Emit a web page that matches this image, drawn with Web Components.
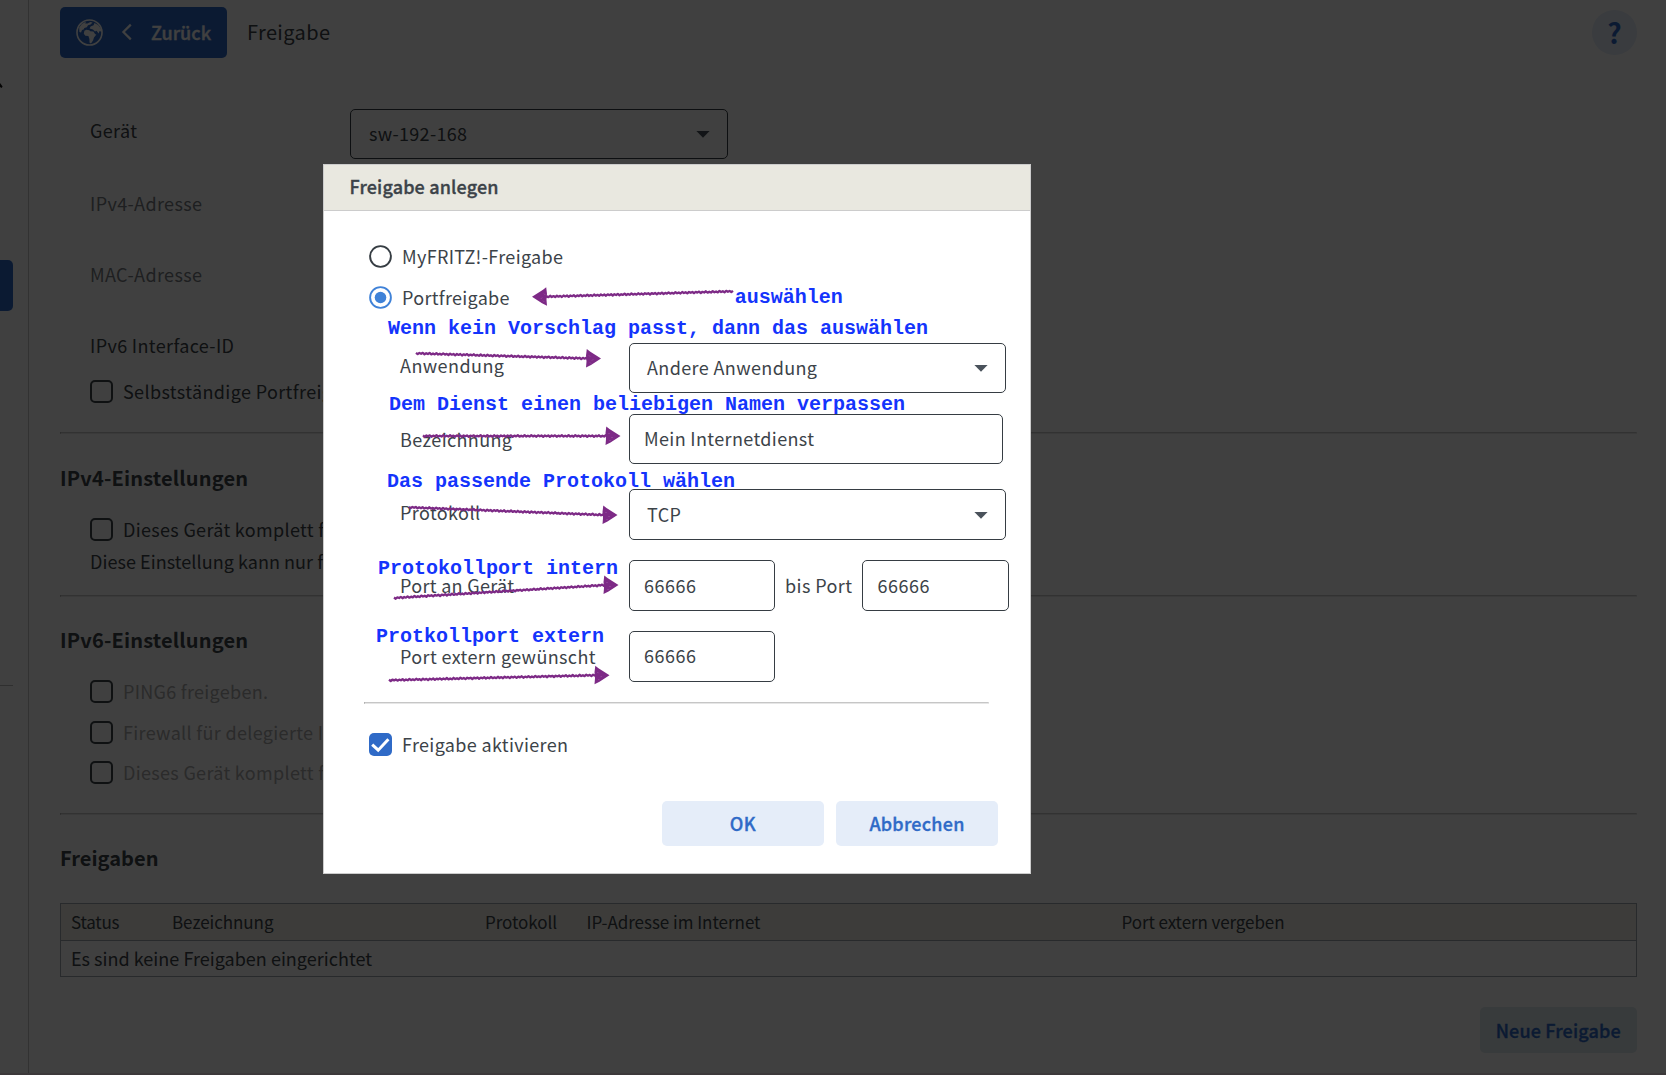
<!DOCTYPE html>
<html lang="de">
<head>
<meta charset="utf-8">
<title>Freigabe</title>
<style>
html,body{margin:0;height:1075px;overflow:hidden;background:#fff}
body{font:400 18px/24px "Noto Sans CJK SC","Noto Sans",sans-serif;color:#3c4349}
</style>
</head>
<body>
<share-app></share-app>
<script>
const define = (name, html, init) => {
  const t = document.createElement('template');
  t.innerHTML = html;
  customElements.define(name, class extends HTMLElement {
    constructor() {
      super();
      this.attachShadow({mode: 'open'}).append(t.content.cloneNode(true));
    }
    connectedCallback() { if (init) init(this, this.shadowRoot); }
  });
};

/* Text label tracked out to width "w"; "col" is the width of the table column it fills */
define('ui-text', `<style>:host{display:inline-block;white-space:pre;flex:none}</style><slot></slot>`, el => {
  const w = parseFloat(el.getAttribute('w'));
  if (!w) return;
  el.style.letterSpacing = '0';
  const n = el.textContent.length;
  const natural = el.getBoundingClientRect().width;
  el.style.letterSpacing = ((w - natural) / (n - 1)).toFixed(3) + 'px';
  if (el.hasAttribute('col')) el.style.width = el.getAttribute('col') + 'px';
});

define('ui-check', `<style>
:host{display:flex;align-items:center;height:23px;gap:10px}
.b{width:23px;height:23px;box-sizing:border-box;border:2px solid #3c4349;border-radius:5px;flex:none}
:host([checked]) .b{border:0;background:#2f6ac7}
svg{display:none;width:23px;height:23px}
:host([checked]) svg{display:block}
span{margin-top:-2px}
</style><div class="b"><svg viewBox="0 0 23 23"><path d="M3.2 11.6 9.2 17.2 19.4 6.3" fill="none" stroke="#fff" stroke-width="3"/></svg></div><span><slot></slot></span>`);

define('ui-radio', `<style>
:host{display:flex;align-items:center;height:23px;gap:10px}
svg{width:23px;height:23px;flex:none}
.on{display:none}
:host([checked]) .on{display:block}
:host([checked]) .ring{stroke:#3f82d8}
span{margin-top:-1px}
</style><svg viewBox="0 0 23 23"><circle class="ring" cx="11.5" cy="11.5" r="10.4" fill="none" stroke="#363d43" stroke-width="1.9"/><circle class="on" cx="11.5" cy="11.5" r="5.8" fill="#3f82d8"/></svg><span><slot></slot></span>`);

define('ui-field', `<style>
:host{display:flex;box-sizing:border-box;align-items:center;justify-content:space-between;height:50px;border:1px solid #363d43;border-radius:5px;padding:0 14px;flex:none}
:host([select]){padding:0 17px}
svg{display:none;width:14px;height:8px}
:host([select]) svg{display:block}
</style><slot></slot><svg viewBox="0 0 14 8"><path d="M.4.9h13.2L7 7.7z" fill="#4a525b"/></svg>`);

define('ui-rule', `<style>:host{display:block;box-sizing:border-box;height:2px;border:1px solid #e6e6e6;border-top-color:#c6c6c6;border-left-color:#999}</style>`);

define('ui-button', `<style>
:host{display:flex;align-items:center;justify-content:center;height:45px;border-radius:5px;background:#e5edf9;color:#2f6ac7;font-weight:500;-webkit-text-stroke:.35px #2f6ac7}
</style><slot></slot>`);

define('back-button', `<style>
:host{display:flex;align-items:center;box-sizing:border-box;width:167px;height:51px;border-radius:5px;background:#2f6ac7;color:#fff;font-weight:500;padding-left:16px}
.c{margin:0 17px 2px 17px}
svg{flex:none}
ui-text{margin-top:-2px;-webkit-text-stroke:.35px #fff}
</style>
<svg width="27" height="27" viewBox="0 0 27 27"><circle cx="13.5" cy="13.5" r="12.5" fill="none" stroke="#fff" stroke-width="1.6"/>
<path fill="#fff" d="M3 9.5 5.6 5.2 10 2.4 9.4 4 11.5 4.2 14.3 2.8 17.4 3.2 16 5 12.6 6.1 10.8 8.6 8.6 9.6 9.4 11.4 7.2 10.9 6.2 12.6 8 13.3 5 15.6 5.4 18 2.2 15.4 1.4 12z" opacity="0"/>
<path fill="#fff" d="M3.2 8.6 5.8 5 10 2.4 9.2 4.4 11.6 4.4 14.3 3 16.6 3.6 14.6 5.4 12 6.2 10.8 8.2 8.4 9 7.6 10.6 6 11 5 13.4 3.4 13z"/>
<path fill="#fff" d="M8.4 11.8 10.4 10.8 13.4 11.2 14.2 12.2 17.4 12.4 19.2 15.2 20.4 15.4 18 18.6 17 21.6 15 24.4 13.6 23.8 13.4 20 12.4 17 9.4 16.8 7.8 14.8z"/>
<path fill="#fff" d="M13.6 9.6 14.6 7.4 17.6 6.2 18.4 4 22.2 6 24.8 9.4 25.4 12.8 23.6 12 22.6 14.4 20.6 11.8 19 12.6 17 10.6z"/></svg>
<svg class="c" width="14" height="18" viewBox="0 0 14 18"><path d="M10.8 1.6 3.4 9l7.4 7.4" fill="none" stroke="#fff" stroke-width="2.2"/></svg>
<ui-text w="60">Zurück</ui-text>`);

define('side-nav', `<style>
:host{display:flex;flex-direction:column;box-sizing:border-box;width:29px;height:1075px;border-right:1px solid #c8c8c8;flex:none}
svg{margin-top:83px;flex:none}
.tab{width:13px;height:51px;border-radius:0 5px 5px 0;background:#2f6ac7;margin-top:172px}
.line{width:13px;height:1px;background:#bbb;margin-top:374px}
</style><svg width="3" height="5" viewBox="0 0 3 5"><path d="M0 0 2.6 3.4 1.6 5 0 4z" fill="#111"/></svg><div class="tab"></div><div class="line"></div>`);

define('share-table', `<style>
:host{display:flex;flex-direction:column;box-sizing:border-box;border:1px solid #a0a8b0;height:74px}
div{display:flex;align-items:center;height:35px;padding-left:10px}
.h{background:#f1f0e8;border-bottom:1px solid #a0a8b0;height:36px;font-size:17px}
.r ui-text{margin-top:-1px}
</style><div class="h"><ui-text w="48.5" col="101">Status</ui-text><ui-text w="101.5" col="313">Bezeichnung</ui-text><ui-text w="72" col="101.5">Protokoll</ui-text><ui-text w="174" col="535">IP-Adresse im Internet</ui-text><ui-text w="163">Port extern vergeben</ui-text></div>
<div class="r"><ui-text w="301">Es sind keine Freigaben eingerichtet</ui-text></div>`);

define('share-page', `<style>
:host{display:flex;flex-direction:column;width:1577px;padding:7px 0 0 31px}
header{display:flex;align-items:center;height:51px}
header .t{font-size:20px;margin:-1px auto 0 20px}
.q{width:45px;height:45px;border-radius:50%;background:#e5edf9;color:#2f6ac7;display:flex;align-items:center;justify-content:center;font:700 28px/45px "Noto Sans CJK SC",sans-serif}
.row{display:flex;align-items:center;height:50px;margin-top:21px;padding-left:30px}
.g{width:260px;margin-top:-9px}
.dim{color:#777d82}
ui-field{width:378px}
ui-field ui-text{margin:-3px 0 0 1px}
ui-check{margin-left:30px}
h2{font-size:20px;line-height:40px;font-weight:700;margin:0;height:40px}
.off{color:#aaa}
ui-button{align-self:flex-end;width:157.5px;margin-top:30px;height:46px;background:#dfe9ee}
ui-button ui-text{margin-top:-1px}
</style>
<header><back-button></back-button><ui-text class="t" w="83">Freigabe</ui-text><div class="q">?</div></header>
<div class="row" style="margin-top:51px"><div class="g"><ui-text w="47">Gerät</ui-text></div><ui-field select><ui-text w="98">sw-192-168</ui-text></ui-field></div>
<div class="row dim" style="margin-top:19px"><ui-text w="112">IPv4-Adresse</ui-text></div>
<div class="row dim"><ui-text w="112">MAC-Adresse</ui-text></div>
<div class="row"><ui-text w="144">IPv6 Interface-ID</ui-text></div>
<ui-check style="margin-top:10px"><ui-text w="209">Selbstständige Portfreig</ui-text></ui-check>
<ui-rule style="margin-top:29px"></ui-rule>
<h2 style="margin-top:24px"><ui-text w="188">IPv4-Einstellungen</ui-text></h2>
<ui-check style="margin-top:20px"><ui-text w="201">Dieses Gerät komplett f</ui-text></ui-check>
<div class="row" style="margin-top:8px;height:24px"><ui-text w="233">Diese Einstellung kann nur f</ui-text></div>
<ui-rule style="margin-top:22px"></ui-rule>
<h2 style="margin-top:23px"><ui-text w="188">IPv6-Einstellungen</ui-text></h2>
<ui-check style="margin-top:20px"><ui-text class="off" w="145">PING6 freigeben.</ui-text></ui-check>
<ui-check style="margin-top:18px"><ui-text class="off" w="200">Firewall für delegierte I</ui-text></ui-check>
<ui-check style="margin-top:17px"><ui-text class="off" w="201">Dieses Gerät komplett f</ui-text></ui-check>
<ui-rule style="margin-top:29px"></ui-rule>
<h2 style="margin-top:23px"><ui-text w="98.5">Freigaben</ui-text></h2>
<share-table style="margin-top:25px"></share-table>
<ui-button><ui-text w="125">Neue Freigabe</ui-text></ui-button>`);

define('share-dialog', `<style>
:host{display:flex;flex-direction:column;box-sizing:border-box;width:708px;height:710px;background:#fff;border:1px solid #ccc}
header{display:flex;align-items:center;height:45px;background:#e9e8e0;border-bottom:1px solid #ccc;padding-left:25.5px;font-weight:500;-webkit-text-stroke:.35px #3c4349}
header ui-text{margin-top:-3px}
.body{display:flex;flex-direction:column;padding-left:45px}
ui-radio{margin-top:18px}
ui-radio:first-child{margin-top:34px}
.row{display:flex;align-items:center;height:50px;padding-left:31px}
.l{width:229px;flex:none}
ui-field ui-text{margin-top:-2px}
.port{width:146px;height:51px}
.sep{margin:0 10px}
.acts{display:flex;gap:12px;margin:45px 0 0 293px}
ui-button{width:162px}
ui-button ui-text{margin-top:-1px}
</style>
<header><ui-text w="149">Freigabe anlegen</ui-text></header>
<div class="body">
<ui-radio><ui-text w="161">MyFRITZ!-Freigabe</ui-text></ui-radio>
<ui-radio checked><ui-text w="107.5">Portfreigabe</ui-text></ui-radio>
<div class="row" style="margin-top:34px"><div class="l" style="margin-top:-7px"><ui-text w="104">Anwendung</ui-text></div><ui-field select style="width:377px"><ui-text w="170">Andere Anwendung</ui-text></ui-field></div>
<div class="row" style="margin-top:21px"><div class="l" style="margin-top:-1px"><ui-text w="112">Bezeichnung</ui-text></div><ui-field style="width:374px"><ui-text w="170">Mein Internetdienst</ui-text></ui-field></div>
<div class="row" style="margin-top:25px;height:51px"><div class="l" style="margin-top:-6px"><ui-text w="80">Protokoll</ui-text></div><ui-field select style="width:377px;height:51px"><ui-text w="34">TCP</ui-text></ui-field></div>
<div class="row" style="margin-top:20px;height:51px"><div class="l" style="margin-top:-2px"><ui-text w="114">Port an Gerät</ui-text></div><ui-field class="port"><ui-text w="52">66666</ui-text></ui-field><ui-text class="sep" w="67" style="margin-top:-2px">bis Port</ui-text><ui-field class="port" style="width:147px;padding-left:14px"><ui-text w="52">66666</ui-text></ui-field></div>
<div class="row" style="margin-top:20px;height:51px"><div class="l" style="margin-top:-2px"><ui-text w="195.5">Port extern gewünscht</ui-text></div><ui-field class="port"><ui-text w="52" style="margin-top:-4px">66666</ui-text></ui-field></div>
<ui-rule style="margin:20px 0 0 -5px;width:625px"></ui-rule>
<ui-check checked style="margin-top:29px"><ui-text w="166">Freigabe aktivieren</ui-text></ui-check>
<div class="acts"><ui-button><ui-text w="26">OK</ui-text></ui-button><ui-button><ui-text w="95">Abbrechen</ui-text></ui-button></div>
</div>`);

/* Hand-drawn arrows and typed hints, placed freely over the dialog */
define('hint-layer', `<style>
:host{display:block}
svg{display:block}
text{font:700 20px "Liberation Mono","Courier New",monospace;fill:#1434fc;white-space:pre}
</style><svg width="1666" height="1075" viewBox="0 0 1666 1075"><g id="a"></g>
<text x="734.7" y="302.5">auswählen</text>
<text x="388" y="333.6">Wenn kein Vorschlag passt, dann das auswählen</text>
<text x="389" y="410.4">Dem Dienst einen beliebigen Namen verpassen</text>
<text x="387" y="487.4">Das passende Protokoll wählen</text>
<text x="378" y="573.5">Protokollport intern</text>
<text x="376" y="642.4">Protkollport extern</text></svg>`, (el, r) => {
  const arrows = [[733,291.3,532,296.7],[416,353.3,601,358.5],[423,436,620.5,436],[409,507.3,617.5,515],[394,598,618.5,585],[389,680.2,609.5,675.2]];
  let out = '';
  for (const [x1, y1, x2, y2] of arrows) {
    const dir = Math.sign(x2 - x1), bx = x2 - dir * 13, n = Math.round(Math.abs(bx - x1) / 1.7);
    let d = '';
    for (let i = 0; i <= n; i++) {
      const t = i / n, amp = .55 + .25 * Math.sin(i * 1.7);
      const x = x1 + (bx - x1) * t, y = y1 + (y2 - y1) * t + (i % 2 ? amp : -amp);
      d += (i ? 'L' : 'M') + x.toFixed(1) + ' ' + y.toFixed(1);
    }
    out += `<path d="${d}" fill="none" stroke="#7d2a86" stroke-width="2.3" stroke-linejoin="round"/>`;
    const hx = x2 - dir * 15;
    out += `<path d="M${x2} ${y2}L${hx + dir * 4} ${y2 - 7}L${hx + dir * .8} ${y2 - 9.4}L${hx} ${y2 - 3}L${hx + dir * .5} ${y2 + 3}L${hx} ${y2 + 9}L${hx + dir * 5} ${y2 + 6.5}Z" fill="#7d2a86"/>`;
    out += `<path d="M${hx + dir * 3} ${y2 - 3}l1 1M${hx + dir * 6} ${y2 + 2}l1 -1M${hx + dir * 4} ${y2 + 4}l1 1" stroke="#9a58a2" stroke-width="1"/>`;
  }
  r.getElementById('a').innerHTML = out;
});

define('share-app', `<style>
:host{display:block;position:relative;width:1666px;height:1075px;overflow:hidden}
.page{display:flex;height:1075px}
.shade{position:absolute;inset:0;background:rgba(0,0,0,.75);border-bottom:2px solid #3c383a;box-sizing:border-box}
share-dialog{position:absolute;left:323px;top:164px}
hint-layer{position:absolute;left:0;top:0}
</style>
<div class="page"><side-nav></side-nav><share-page></share-page></div>
<div class="shade"></div><share-dialog></share-dialog><hint-layer></hint-layer>`);
</script>
</body>
</html>
